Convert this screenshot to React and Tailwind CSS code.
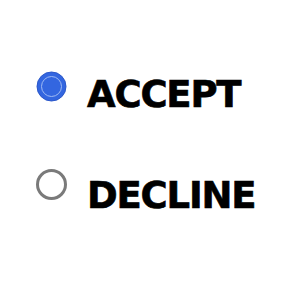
import React from "react";

export default function App() {
  return (
    <div
      className="w-[288px] h-[288px] bg-white pl-[36px] pt-[71px] text-black"
      style={{ fontFamily: '"DejaVu Sans", Verdana, sans-serif' }}
    >
      <div className="flex items-start h-[98px]">
        <svg width="31" height="31" viewBox="0 0 31 31" className="shrink-0">
          <circle cx="15.5" cy="15.5" r="14.5" fill="#3366e0" stroke="#2b57c9" strokeWidth="1" />
          <circle cx="15.5" cy="15.5" r="10" fill="none" stroke="#9fbaf3" strokeWidth="1" />
        </svg>
        <span className="ml-[20px] mt-[5px] text-[37px] leading-none font-bold tracking-[-1.2px] [-webkit-text-stroke:0.6px_black]">
          ACCEPT
        </span>
      </div>
      <div className="flex items-start">
        <svg width="31" height="31" viewBox="0 0 31 31" className="shrink-0">
          <circle cx="15.5" cy="15.5" r="14" fill="#fff" stroke="#7a7a7a" strokeWidth="3" />
        </svg>
        <span className="ml-[20px] mt-[8px] text-[37px] leading-none font-bold tracking-[-1.2px] [-webkit-text-stroke:0.6px_black]">
          DECLINE
        </span>
      </div>
    </div>
  );
}
